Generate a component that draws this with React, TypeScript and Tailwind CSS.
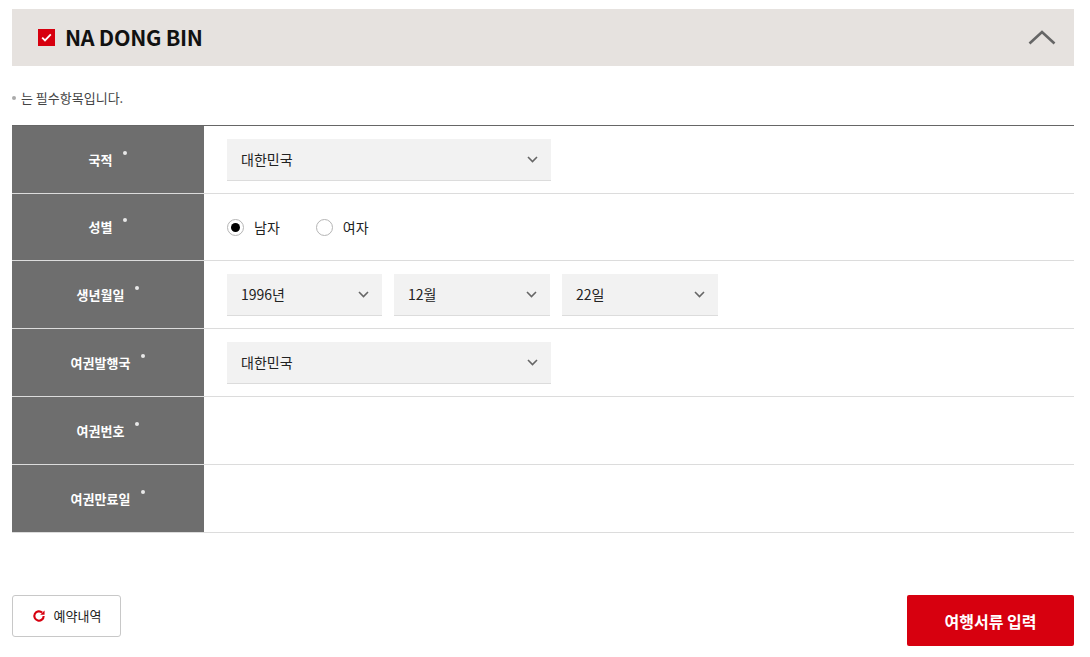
import React from "react";

const font = { fontFamily: '"Noto Sans CJK KR", "Noto Sans", sans-serif' };

function Chevron() {
  return (
    <svg width="11" height="7" viewBox="0 0 11 7" fill="none">
      <path d="M1 1l4.5 4.5L10 1" stroke="#666" strokeWidth="1.6" />
    </svg>
  );
}

function SelectBox({ value, width }: { value: string; width: string }) {
  return (
    <div
      className={`${width} h-[42px] bg-[#f2f2f2] border-b border-[#dcdcdc] flex items-center justify-between pl-[14px] pr-[13px] text-[14px] text-[#222]`}
    >
      <span>{value}</span>
      <Chevron />
    </div>
  );
}

function Row({
  label,
  height = "h-[68px]",
  children,
}: {
  label: string;
  height?: string;
  children?: React.ReactNode;
}) {
  return (
    <div className={`flex ${height} border-b border-[#dcdcdc]`}>
      <div className="w-[192px] bg-[#6e6e6e] flex items-center justify-center text-white text-[13px] font-bold">
        <span>{label}</span>
        <span className="ml-[11px] -mt-[14px] w-[4px] h-[4px] rounded-full bg-[#e8e8e8]" />
      </div>
      <div className="flex-1 flex items-center pl-[23px] gap-[12px]">{children}</div>
    </div>
  );
}

function Radio({ checked, label }: { checked?: boolean; label: string }) {
  return (
    <div className="flex items-center gap-[10px] text-[14px] text-[#222] mr-[24px]">
      <span className="w-[17px] h-[17px] rounded-full border border-[#b5b5b5] bg-white flex items-center justify-center">
        {checked && <span className="w-[9px] h-[9px] rounded-full bg-black" />}
      </span>
      <span>{label}</span>
    </div>
  );
}

export default function App() {
  return (
    <div className="w-[1090px] h-[657px] bg-white pt-[9px] pl-[12px] pr-[16px]" style={font}>
      <div className="h-[57px] bg-[#e6e2df] flex items-center justify-between pl-[26px] pr-[18px]">
        <div className="flex items-center gap-[10px]">
          <span className="w-[17px] h-[17px] bg-[#d7000f] flex items-center justify-center">
            <svg width="11" height="9" viewBox="0 0 11 9" fill="none">
              <path d="M1.2 4.6l2.8 2.8L9.8 1.4" stroke="#fff" strokeWidth="1.8" />
            </svg>
          </span>
          <span className="text-[21.5px] font-bold text-[#111] tracking-[-0.3px]">NA DONG BIN</span>
        </div>
        <svg width="28" height="15" viewBox="0 0 28 15" fill="none">
          <path d="M1.5 13.5L14 2l12.5 11.5" stroke="#666" strokeWidth="2.6" />
        </svg>
      </div>

      <div className="mt-[22px] mb-[18px] h-[19px] flex items-center text-[13px] text-[#444]">
        <span className="w-[4px] h-[4px] rounded-full bg-[#aaa] mr-[5px]" />
        <span>는 필수항목입니다.</span>
      </div>

      <div className="border-t border-[#666]">
        <Row label="국적">
          <SelectBox value="대한민국" width="w-[324px]" />
        </Row>
        <Row label="성별" height="h-[67px]">
          <Radio checked label="남자" />
          <Radio label="여자" />
        </Row>
        <Row label="생년월일">
          <SelectBox value="1996년" width="w-[155px]" />
          <SelectBox value="12월" width="w-[156px]" />
          <SelectBox value="22일" width="w-[156px]" />
        </Row>
        <Row label="여권발행국">
          <SelectBox value="대한민국" width="w-[324px]" />
        </Row>
        <Row label="여권번호" />
        <Row label="여권만료일" />
      </div>

      <div className="mt-[62px] flex items-start justify-between">
        <button className="w-[109px] h-[42px] border border-[#c8c8c8] rounded-[3px] bg-white flex items-center justify-center gap-[8px] text-[13px] text-[#222]">
          <svg width="14" height="14" viewBox="0 0 24 24" fill="none">
            <path d="M20 12a8 8 0 1 1-2.6-5.9" stroke="#d7000f" strokeWidth="3.6" strokeLinecap="butt" />
            <path d="M21.5 2.5v7.5H14z" fill="#d7000f" />
          </svg>
          <span>예약내역</span>
        </button>
        <button className="w-[167px] h-[51px] bg-[#d7000f] rounded-[2px] text-white text-[16px] font-bold">
          여행서류 입력
        </button>
      </div>
    </div>
  );
}
